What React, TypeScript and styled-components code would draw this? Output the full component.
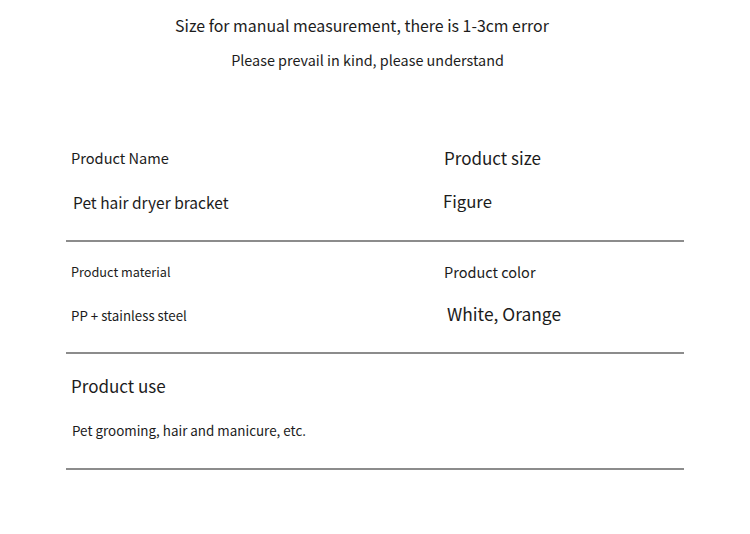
import React from "react";
import styled, { createGlobalStyle } from "styled-components";

const Global = createGlobalStyle`
  html, body { margin: 0; padding: 0; background: #ffffff; }
  body { font-family: "Noto Sans CJK SC", "Noto Sans", sans-serif; color: #1c1c1c; }
`;

const Page = styled.div`
  width: 750px;
  height: 534px;
  background: #fff;
  padding-top: 16px;
  box-sizing: border-box;
`;

const Header = styled.header`
  display: flex;
  flex-direction: column;
  align-items: center;
  gap: 14px;
`;

const HeadLine = styled.div<{ $size: number; $shift: number }>`
  font-size: ${(p) => p.$size}px;
  line-height: 20px;
  white-space: nowrap;
  margin-right: ${(p) => p.$shift}px;
`;

const Table = styled.div`
  margin: 68px 66px 0 66px;
  width: 618px;
  display: flex;
  flex-direction: column;
`;

const Section = styled.section<{ $top: number; $bottom: number }>`
  display: grid;
  grid-template-columns: 373px 1fr;
  padding: ${(p) => p.$top}px 0 ${(p) => p.$bottom}px 0;
  border-bottom: 2px solid #8c8c8c;
`;

const Cell = styled.div`
  display: flex;
  flex-direction: column;
  gap: 24px;
`;

const Text = styled.div<{ $size: number; $indent: number; $lift?: number }>`
  font-size: ${(p) => p.$size}px;
  line-height: 20px;
  padding-left: ${(p) => p.$indent}px;
  white-space: nowrap;
  margin-top: ${(p) => -(p.$lift ?? 0)}px;
  margin-bottom: ${(p) => p.$lift ?? 0}px;
`;

type Item = {
  label: string;
  ls: number;
  li: number;
  value: string;
  vs: number;
  vi: number;
  vl?: number;
};

const rows: { top: number; bottom: number; items: Item[] }[] = [
  {
    top: 10,
    bottom: 28,
    items: [
      { label: "Product Name", ls: 14.6, li: 5, value: "Pet hair dryer bracket", vs: 15.5, vi: 7 },
      { label: "Product size", ls: 17, li: 5, value: "Figure", vs: 16.7, vi: 4, vl: 1 },
    ],
  },
  {
    top: 20,
    bottom: 26,
    items: [
      { label: "Product material", ls: 12.7, li: 5, value: "PP + stainless steel", vs: 13.3, vi: 5 },
      { label: "Product color", ls: 14.5, li: 5, value: "White, Orange", vs: 17.4, vi: 8, vl: 2 },
    ],
  },
  {
    top: 22,
    bottom: 28,
    items: [
      { label: "Product use", ls: 17, li: 5, value: "Pet grooming, hair and manicure, etc.", vs: 13.4, vi: 6 },
    ],
  },
];

export default function App() {
  return (
    <Page>
      <Global />
      <Header>
        <HeadLine $size={15.9} $shift={26}>Size for manual measurement, there is 1-3cm error</HeadLine>
        <HeadLine $size={14.4} $shift={15}>Please prevail in kind, please understand</HeadLine>
      </Header>
      <Table>
        {rows.map((r, i) => (
          <Section key={i} $top={r.top} $bottom={r.bottom}>
            {r.items.map((it) => (
              <Cell key={it.label}>
                <Text $size={it.ls} $indent={it.li}>{it.label}</Text>
                <Text $size={it.vs} $indent={it.vi} $lift={it.vl}>{it.value}</Text>
              </Cell>
            ))}
          </Section>
        ))}
      </Table>
    </Page>
  );
}
